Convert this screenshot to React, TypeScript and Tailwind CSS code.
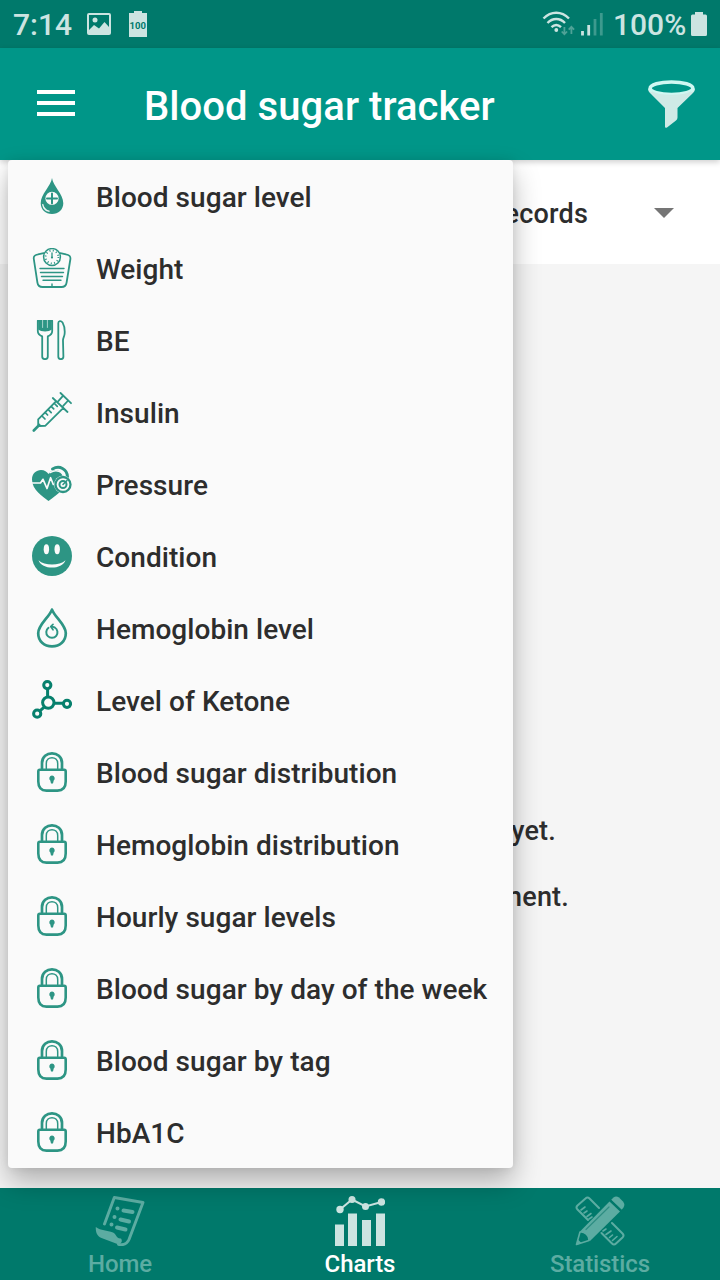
import React from "react";

const G = "#2d9584";

const Svg = ({ children }: { children: React.ReactNode }) => (
  <svg width="40" height="40" viewBox="0 0 40 40" fill="none" stroke={G} strokeWidth="1.8" strokeLinecap="round" strokeLinejoin="round" className="block shrink-0">
    {children}
  </svg>
);

const Drop = () => (
  <Svg>
    <path d="M20 2C19 10 8.7 18 8.7 27.2C8.7 33.5 13.5 38 20 38S31.3 33.5 31.3 27.2C31.3 18 21 10 20 2Z" fill={G} stroke="none" />
    <circle cx="20" cy="22.4" r="6.6" fill="#fafafa" stroke="none" />
    <path d="M20 17.4V27.4M15 22.4H25" strokeWidth="2" />
    <path d="M10.8 28.5C12 32.5 14.5 34.3 17.5 35.2C13.8 35.6 10.6 32.6 10.8 28.5Z" fill="#fafafa" stroke="#fafafa" strokeWidth="0.8" />
  </Svg>
);

const Scale = () => (
  <Svg>
    <path d="M11.6 5.2L6 6.4C2.5 7 1.4 8 1.8 11L5.4 34.5C5.9 38 7.6 39 10.5 39H29.5C32.4 39 34.1 38 34.6 34.5L38.4 11C38.7 8 37.5 7 34 6.400L28.400 5.200" />
    <circle cx="20" cy="9" r="8.400" strokeWidth="1.500" />
    <circle cx="20" cy="9" r="6.400" strokeWidth="1.900" strokeDasharray="1 2.350" strokeLinecap="butt" />
    <path d="M20 5V9.500" strokeWidth="1.300" />
    <circle cx="20" cy="9.500" r="1.100" fill={G} stroke="none" />
    <path d="M8 20.500H32M8.500 24.500H31.500M9.500 28.500H30.500M11 32.300H29M20 36V39" strokeWidth="1.400" />
  </Svg>
);

const Cutlery = () => (
  <Svg>
    <path d="M5.800 0.800V11C5.800 13.600 7.800 15.400 10.200 16.400V36.500C10.200 40 15.800 40 15.800 36.500V16.400C18.200 15.400 20.200 13.600 20.200 11V0.800Z" />
    <path d="M6.200 1H19.800V9.500C17 12 9 12 6.200 9.500Z" fill={G} stroke="none" />
    <path d="M10.600 0V7.500M15.400 0V7.500" stroke="#a8d5cd" strokeWidth="1" />
    <path d="M26.300 3C26.300 .8 29 .3 30.500 2.400C32.200 5.500 33 10 32.600 14C32.400 16.500 30.800 18 31 21L31.400 36.500C31.400 40 26.300 40 26.300 36.500Z" />
  </Svg>
);

const Syringe = () => (
  <Svg>
    <path d="M1.800 38.500L7.200 33" strokeWidth="2.600" />
    <path d="M6.200 27.300V32.600L7.500 34L13.200 33.800M6.200 27.300L23.700 9.700M13.200 33.800L31.400 15.800M20.800 6L35.500 20M28.500 1L39 11.200M31.200 3.700L26.300 9.200M36.200 8.500L31.400 13.600" />
    <path d="M10 24L13 27M13.300 20.700L15.600 23M16.300 17.700L19.200 20.600M19.400 14.600L21.700 16.900M22.400 11.500L25.300 14.400" strokeWidth="1.700" />
  </Svg>
);

const Heart = () => (
  <Svg>
    <path d="M16.500 37C11 32.500 0 26 0 15.500C0 9.500 4.300 6 9 6C12.500 6 15 7.800 16.500 10C19 5.500 26 4.500 29.500 9C35 14 34 22.500 29 27C25 31 20.500 33.800 16.500 37Z" fill={G} stroke="none" />
    <path d="M20.500 5C27.500 1 35.200 5 35.500 13" stroke={G} strokeWidth="3" />
    <path d="M18 8.600C24 5 31 7.200 31.500 13" stroke="#fafafa" strokeWidth="1.500" />
    <path d="M0 19H8.500L11 15.300L15 24.500L18.600 13.700L21.300 20.500H24" stroke="#fafafa" strokeWidth="1.700" />
    <circle cx="31" cy="20.500" r="8.900" fill="#fafafa" stroke="none" />
    <circle cx="31" cy="20.500" r="7.500" strokeWidth="2.300" />
    <circle cx="31" cy="20.500" r="3.500" strokeWidth="2" />
    <path d="M31 20.500L35 16.500" strokeWidth="1.600" />
  </Svg>
);

const Smile = () => (
  <Svg>
    <circle cx="20" cy="20" r="20" fill={G} stroke="none" />
    <ellipse cx="14.400" cy="13.200" rx="2.700" ry="5" fill="#fafafa" stroke="none" />
    <ellipse cx="25.200" cy="13.200" rx="2.700" ry="5" fill="#fafafa" stroke="none" />
    <path d="M6.500 24.200C12.500 30 27.500 30 33.500 24.200C30 34 10 34 6.500 24.200Z" fill="#fafafa" stroke="none" />
  </Svg>
);

const DropOutline = () => (
  <Svg>
    <path d="M20 1.600C17.500 9 6.200 16.500 6.200 25.200C6.200 33 12 38.300 20 38.300S33.800 33 33.800 25.200C33.800 16.500 22.500 9 20 1.600Z" strokeWidth="2.700" />
    <path d="M16.500 19.800A5.600 5.600 0 1 0 22.800 19.500L19.800 18.600" strokeWidth="2" />
    <path d="M21 16.300L18.700 18.500L21 21.800" strokeWidth="1.700" />
  </Svg>
);

const Molecule = () => (
  <svg width="40" height="40" viewBox="0 0 40 40" fill="none" stroke="#07806d" strokeWidth="3" className="block shrink-0">
    <path d="M15.600 9V17M22.300 23.200H31M12.200 27.200L8.200 30.600" />
    <circle cx="15.300" cy="5.100" r="3.600" />
    <circle cx="16.300" cy="22.600" r="5.700" />
    <circle cx="35" cy="23.800" r="3.600" />
    <circle cx="5.200" cy="33.700" r="3.600" />
  </svg>
);

const Lock = () => (
  <Svg>
    <path d="M10 16.500V11C10 -1.800 30 -1.800 30 11V16.500" strokeWidth="2.700" />
    <path d="M14.300 16.500V11.500C14.300 3.800 25.700 3.800 25.700 11.500V16.500" strokeWidth="1.500" />
    <path d="M7.800 17.700H32.200C33.300 17.700 33.700 18.200 33.700 19.400V29.500C33.700 35.500 30.500 38.600 25.500 38.600H14.500C9.500 38.600 6.300 35.500 6.300 29.500V19.400C6.300 18.200 6.700 17.700 7.800 17.700Z" strokeWidth="2.600" />
    <path d="M20 23.400A2.900 2.900 0 0 1 21.700 28.500L21 31.500H19L18.300 28.500A2.900 2.900 0 0 1 20 23.400Z" fill={G} stroke="none" />
  </Svg>
);

const items: [string, () => React.JSX.Element][] = [
  ["Blood sugar level", Drop],
  ["Weight", Scale],
  ["BE", Cutlery],
  ["Insulin", Syringe],
  ["Pressure", Heart],
  ["Condition", Smile],
  ["Hemoglobin level", DropOutline],
  ["Level of Ketone", Molecule],
  ["Blood sugar distribution", Lock],
  ["Hemoglobin distribution", Lock],
  ["Hourly sugar levels", Lock],
  ["Blood sugar by day of the week", Lock],
  ["Blood sugar by tag", Lock],
  ["HbA1C", Lock],
];

const StatusBar = () => (
  <div className="flex h-12 shrink-0 items-center justify-between bg-[#00796b] pr-[13px] pl-[13px] text-[#cce4e1]">
    <div className="flex items-center">
      <span className="w-[74px] pt-[2px] text-[30px] leading-[46px] font-medium">7:14</span>
      <svg width="24" height="22" viewBox="0 0 24 22" className="block">
        <path fillRule="evenodd" fill="currentColor" d="M2 0H22Q24 0 24 2V20Q24 22 22 22H2Q0 22 0 20V2Q0 0 2 0ZM2 2V17L7 12L12 15.500L17.500 9L22 14V2Z" />
        <circle cx="8" cy="7" r="2.500" fill="currentColor" />
      </svg>
      <svg width="18" height="26" viewBox="0 0 18 26" className="ml-[18px] block">
        <path d="M5 0H13V2H18V26H0V2H5Z" fill="currentColor" />
        <text x="8.700" y="18" textAnchor="middle" fontSize="9.500" fontWeight="700" fontFamily="Roboto" fill="#00796b">100</text>
      </svg>
    </div>
    <div className="flex items-center">
      <svg width="62" height="26" viewBox="0 0 62 26" fill="none" stroke="currentColor" strokeWidth="2.400" className="block">
        <path d="M1.500 7.500C9 -.2 19.500 -.2 27 7.500M5.500 12C10.500 6.700 18 6.700 23 12M9.500 16.200C12.500 13.200 16 13.200 19 16.200" />
        <circle cx="14.300" cy="19" r="1.900" fill="currentColor" stroke="none" />
        <path d="M22.400 16V23M19.700 20.500L22.400 23.300L25.100 20.500M29.400 23V16M26.700 18.700L29.400 15.900L32.100 18.700" stroke="#4fa297" strokeWidth="1.800" />
        <path d="M40.500 20V24.500M46.700 14V24.500" strokeWidth="2.800" />
        <path d="M53 8V24.500M59.300 2V24.500" stroke="#3d9a8e" strokeWidth="2.800" />
      </svg>
      <span className="ml-[9px] w-[72px] pt-[2px] text-[30px] leading-[46px] font-medium whitespace-nowrap">100%</span>
      <svg width="16" height="24" viewBox="0 0 16 24" className="ml-[6px] block">
        <path d="M4 0H12V2.500H14.500Q16 2.500 16 4V22.500Q16 24 14.500 24H1.500Q0 24 0 22.500V4Q0 2.500 1.500 2.500H4Z" fill="currentColor" />
      </svg>
    </div>
  </div>
);

const AppBar = () => (
  <header className="z-10 flex h-28 shrink-0 items-center bg-[#009688] pr-[25px] pl-[37px] text-white shadow-[0_2px_6px_rgba(0,0,0,0.2)]">
    <div className="flex w-[38px] flex-col gap-[7px] pb-[2px]">
      <div className="h-1 bg-white" />
      <div className="h-1 bg-white" />
      <div className="h-1 bg-white" />
    </div>
    <h1 className="ml-[69px] flex-1 pt-[6px] text-[40px] leading-[48px] font-medium tracking-[0.05px] whitespace-nowrap">Blood sugar tracker</h1>
    <svg width="47" height="48" viewBox="0 0 47 48" className="block">
      <path d="M0 8.500C0 11 1.200 12.200 3 14L17 28V46.500Q17 48.500 19 47.500L28 40.500Q29.500 39.300 29.500 37.500V28L44 14C45.800 12.200 47 11 47 8.500Z" fill="#cfeae6" />
      <ellipse cx="23.500" cy="8.300" rx="21.300" ry="6.300" fill="#009688" stroke="#cff8f2" strokeWidth="3.600" />
      <path d="M3.500 12C11 17 36 17 43.500 12" fill="none" stroke="#cfeae6" strokeWidth="2" />
    </svg>
  </header>
);

const ReceiptIcon = () => (
  <svg width="50" height="50" viewBox="0 0 50 50" fill="none" stroke="currentColor" strokeWidth="2.900" strokeLinecap="round" strokeLinejoin="round" className="block">
    <path d="M9.500 28L19.300 1.500L48 6.500L34 43.500C32 48 28 49.300 23.500 48.300" />
    <path d="M.8 31C6 35 12 34 18 36.500C22 38.300 21 43 26 42.500C28 45 26 48.500 23 48.300L6.500 42C2 40 .5 36 .8 31Z" fill="currentColor" stroke="none" />
    <path d="M28.500 14.500L37.500 16M25.500 23.500L34 25.500M22 31.500L30.500 33.500" strokeWidth="4" />
    <path d="M22.500 12.500V12.600M19.500 21V21.100M16.500 28.500V28.600" strokeWidth="4" />
  </svg>
);

const ChartIcon = () => (
  <svg width="50" height="50" viewBox="0 0 50 50" fill="#cce4e1" className="block">
    <path d="M0 28.500H9V50H0ZM13 17.500H22V50H13ZM27 24H36V50H27ZM41 17.500H50V50H41Z" />
    <path d="M5 13.500L17 3.500L30.500 10.500L46.500 6" fill="none" stroke="#cce4e1" strokeWidth="2" />
    <circle cx="5" cy="13.500" r="3.700" />
    <circle cx="17" cy="3.500" r="3.500" />
    <circle cx="30.500" cy="10.500" r="3.500" />
    <circle cx="46.500" cy="6" r="3.700" />
  </svg>
);

const PencilRulerIcon = () => (
  <svg width="50" height="50" viewBox="0 0 50 50" fill="none" stroke="currentColor" strokeWidth="2" strokeLinecap="round" strokeLinejoin="round" className="block">
    <path d="M24 12L14.500 2.500Q12.500 .5 10.500 2.500L2.500 9.500Q.5 11.500 2.500 13.500L13 24M37 27L47.500 37.500Q49.500 39.500 47.500 41.500L41 47.500Q39 49.500 37 47.500L26.500 37" />
    <path d="M6 14L10 11M9 17L12 15M12 20.500L16 17.500M14 23L17 21M28 35L31 33M31 38.500L36 35M34.500 41.500L37.500 39M37.500 44.500L42 40.500" strokeWidth="1.600" />
    <path d="M34.500 5.500L45 15.500L15 45L5 35.500Z" fill="currentColor" stroke="none" />
    <path d="M36 4L38.500 1.500Q41 -.5 44 1.500L48 5.500Q50.500 8.500 48.500 11.500L46.500 14Z" fill="currentColor" stroke="none" />
    <path d="M36 4.500L46.500 14.500" stroke="#00796b" strokeWidth="1.500" />
    <path d="M34 11L11 33.500" stroke="#2d8d82" strokeWidth="1.200" />
    <path d="M5 36L1.500 48.500L14 44.500C15 40 9 35 5 36Z" fill="#00796b" strokeWidth="1.600" />
    <path d="M2.800 43.500L1.300 49L6.500 47Z" fill="currentColor" stroke="none" />
  </svg>
);

const tabs = [
  { label: "Home", Icon: ReceiptIcon, active: false },
  { label: "Charts", Icon: ChartIcon, active: true },
  { label: "Statistics", Icon: PencilRulerIcon, active: false },
];

export default function App() {
  return (
    <div className="relative flex h-[1280px] w-[720px] flex-col overflow-hidden bg-[#f5f5f5] font-['Roboto',sans-serif] text-[#2d2d2d]">
      <StatusBar />
      <AppBar />
      <div className="flex h-[104px] shrink-0 items-center justify-end bg-white pt-[5px] pr-[46px]">
        <span className="text-[27px] font-medium tracking-[0.2px]">All records</span>
        <svg width="20" height="10" viewBox="0 0 20 10" className="mb-[3px] ml-[66px] block">
          <path d="M0 0H20L10 10Z" fill="#757575" />
        </svg>
      </div>
      <main className="flex flex-1 flex-col items-end pt-[534px] text-[27px] leading-[66px] font-medium tracking-[0.2px]">
        <p className="pr-[164px]">yet.</p>
        <p className="pr-[151px]">measurement.</p>
      </main>
      <nav className="grid h-[92px] shrink-0 grid-cols-3 bg-[#00796b]">
        {tabs.map(({ label, Icon, active }) => (
          <div key={label} className={active ? "flex flex-col items-center pt-2 text-white" : "flex flex-col items-center pt-2 text-[#5caca2]"}>
            <Icon />
            <span className="mt-[4px] text-[24px] leading-[28px] font-medium tracking-[-0.1px]">{label}</span>
          </div>
        ))}
      </nav>
      <ul className="absolute top-40 left-2 z-20 w-[505px] rounded-[4px] bg-[#fafafa] shadow-[0_14px_28px_rgba(0,0,0,0.28),0_0_10px_rgba(0,0,0,0.08)]">
        {items.map(([label, Icon]) => (
          <li key={label} className="flex h-[72px] items-center gap-6 pl-6">
            <Icon />
            <span className="pt-[4px] text-[28px] leading-8 font-medium tracking-[0.05px] whitespace-nowrap">{label}</span>
          </li>
        ))}
      </ul>
    </div>
  );
}
